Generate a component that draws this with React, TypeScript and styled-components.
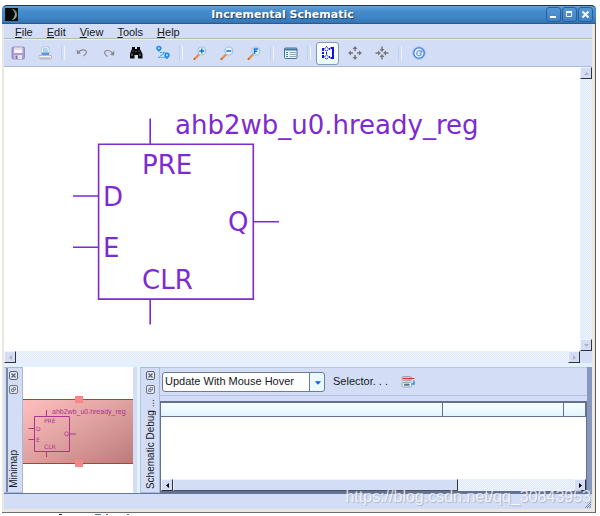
import React from "react";
import styled, { createGlobalStyle, css } from "styled-components";

const GlobalStyle = createGlobalStyle`
  * { box-sizing: border-box; }
  body {
    margin: 0;
    background: #fff;
    color: #16181d;
    font: 11px/13px "Liberation Sans", Arial, sans-serif;
  }
  button { font: inherit; color: inherit; margin: 0; padding: 0; border: 0; background: none; }
  svg { display: block; }
`;

const track = css`
  background: repeating-conic-gradient(#e1eafa 0 25%, #ecf3fc 0 50%) 0 0 / 2px 2px;
`;

const Page = styled.div`
  display: flex;
  flex-direction: column;
  height: 100vh;
  min-height: 400px;
  padding: 5px 4px 0 2px;
`;

const Shell = styled.div`
  flex: 1;
  min-height: 0;
  display: flex;
  flex-direction: column;
  background: #ece8e1;
  border-right: 1px solid #5d5a58;
  border-bottom: 1px solid #6f6c69;
  border-radius: 5px 5px 0 0;
`;

const TitleBar = styled.header`
  display: flex;
  align-items: center;
  height: 19px;
  flex: none;
  padding: 0 3px;
  margin-right: -1px;
  border-top: 1px solid #1d3550;
  border-bottom: 1px solid #2c5a8c;
  border-radius: 5px 5px 0 0;
  background: linear-gradient(#62a1dc, #468ccd 30%, #3f84c5 70%, #3474b3);
`;

const Title = styled.h1`
  flex: 1;
  margin: 0;
  padding-left: 2px;
  text-align: center;
  font: bold 11px/16px "DejaVu Sans", Verdana, sans-serif;
  color: #fff;
  text-shadow: 1px 1px 1px #1c3e63;
`;

const WindowButton = styled.button`
  width: 15px;
  height: 15px;
  margin-left: 1px;
  display: grid;
  place-items: center;
  border: 1px solid #2a5f96;
  border-radius: 3px;
  background: linear-gradient(#5596d5, #3f82c4);
`;

const Client = styled.div`
  flex: 1;
  min-height: 0;
  display: flex;
  flex-direction: column;
  margin: 0 3px 3px 2px;
  background: #d3def6;
`;

const MenuBar = styled.nav`
  display: flex;
  height: 15px;
  flex: none;
  padding-left: 11px;
  gap: 14px;
  border-bottom: 1px solid #b3bba9;
`;

const MenuItem = styled.button`
  line-height: 16px;
  &::first-letter { text-decoration: underline; }
`;

const ToolBar = styled.div`
  display: flex;
  align-items: center;
  height: 28px;
  flex: none;
  border-top: 1px solid #e6edfb;
  border-bottom: 1px solid #a9bbdf;
`;

const ToolButton = styled.button<{ $active?: boolean }>`
  width: ${(p) => (p.$active ? 23 : 27)}px;
  margin: 0 ${(p) => (p.$active ? 2 : 0)}px;
  height: 23px;
  flex: none;
  display: grid;
  place-items: center;
  ${(p) =>
    p.$active &&
    css`
      border: 1px solid #8896b5;
      border-radius: 3px;
      background: linear-gradient(#fff, #e9fbff);
    `}
`;

const Separator = styled.span`
  width: 10px;
  height: 14px;
  flex: none;
  display: grid;
  justify-content: center;
  &::before {
    content: "";
    width: 2px;
    border-left: 1px solid #c3d0ed;
    border-right: 1px solid #edf2fd;
  }
`;

const CanvasArea = styled.main`
  flex: 1;
  min-height: 0;
  display: grid;
  grid-template: minmax(0, 1fr) 12px / minmax(0, 1fr) 12px;
`;

const Canvas = styled.div`
  background: #fff;
  overflow: hidden;
`;

const ScrollBar = styled.div<{ $vertical?: boolean }>`
  display: flex;
  justify-content: space-between;
  flex-direction: ${(p) => (p.$vertical ? "column" : "row")};
  ${track}
`;

const ScrollButton = styled.button<{ $dim?: boolean }>`
  width: 12px;
  height: 12px;
  flex: none;
  display: grid;
  place-items: center;
  border: 1px solid;
  border-color: #eef3fd #303338 #303338 #eef3fd;
  background: #d3def6;
  color: ${(p) => (p.$dim ? "#b4b4b0" : "#000")};
`;

const Docks = styled.div`
  display: flex;
  flex: none;
  height: 131px;
  padding-top: 4px;
  background: #e3f0fd;
  border-bottom: 1px solid #66779b;
`;

const DockTitle = styled.div<{ $grip?: boolean }>`
  width: 19px;
  flex: none;
  display: flex;
  flex-direction: column;
  align-items: center;
  padding: 3px 0 4px ${(p) => (p.$grip ? 1 : 0)}px;
  gap: 5px;
  border: solid #a9b9dc;
  border-width: 1px 1px 1px 0;
  background: ${(p) =>
    p.$grip
      ? "linear-gradient(90deg, #d3def6 2px, #7688ac 2px 4px, #d3def6 4px)"
      : "#d3def6"};
`;

const DockButton = styled.button`
  width: 9px;
  height: 9px;
  flex: none;
`;

const VerticalLabel = styled.span`
  margin-top: auto;
  writing-mode: vertical-rl;
  transform: rotate(180deg);
  white-space: nowrap;
  font-size: 10px;
  line-height: 13px;
`;

const MiniView = styled.section`
  width: 110px;
  flex: none;
  background: #fff;
`;

const Splitter = styled.div`
  width: 8px;
  flex: none;
  border-left: 4px solid #d3def6;
  border-right: 1px solid #b4c4e6;
`;

const DebugPane = styled.section`
  flex: 1;
  min-width: 0;
  display: flex;
  flex-direction: column;
  border-right: 5px solid #8798bf;
  background: #d3def6;
`;

const DebugTools = styled.div`
  display: flex;
  align-items: center;
  height: 29px;
  flex: none;
  padding-left: 2px;
  margin-bottom: 5px;
  border-top: 1px solid #b9c7e6;
  border-bottom: 1px solid #b0bfe0;
`;

const SelectBox = styled.div`
  position: relative;
  width: 163px;
  height: 20px;
  margin-right: 8px;
`;

const Select = styled.select`
  width: 100%;
  height: 100%;
  padding: 0 18px 0 2px;
  appearance: none;
  border: 1px solid #6d7c9b;
  border-radius: 3px;
  background: linear-gradient(90deg, #fff 146px, #6d7c9b 146px 147px, #eafaff 147px);
  color: #16181d;
  font: inherit;
`;

const SelectArrow = styled.span`
  position: absolute;
  right: 4px;
  top: 8px;
  color: #0b5bea;
  pointer-events: none;
`;

const SelectorButton = styled.button`
  margin-right: 12px;
  white-space: pre;
`;

const TableFrame = styled.div`
  flex: 1;
  min-height: 0;
  display: flex;
  flex-direction: column;
  border: 1px solid #63718f;
  border-top-width: 2px;
  border-bottom-width: 2px;
  background: #fff;
`;

const Table = styled.table`
  width: 100%;
  table-layout: fixed;
  border-collapse: collapse;
`;

const HeadCell = styled.th<{ $width?: string }>`
  width: ${(p) => p.$width ?? "auto"};
  height: 13px;
  padding: 0;
  border-right: 1px solid #63718f;
  border-bottom: 1px solid #63718f;
  background: linear-gradient(#f8ffff, #e2f4fd);
`;

const TableScroll = styled.div`
  display: flex;
  height: 12px;
  margin-top: auto;
  ${track}
`;

const Thumb = styled.div`
  width: 71%;
  border: 1px solid;
  border-color: #eef3fd #303338 #4c5260 #eef3fd;
  background: #d3def6;
`;

const ThumbTrack = styled.div`
  flex: 1;
  display: flex;
`;

const StatusBar = styled.footer`
  height: 15px;
  flex: none;
  display: flex;
  align-items: flex-end;
  justify-content: flex-end;
  padding: 0 1px 1px 0;
`;

const Watermark = styled.div`
  position: absolute;
  right: 9px;
  bottom: 10px;
  font-size: 16px;
  line-height: 18px;
  color: rgba(255, 255, 255, 0.75);
  text-shadow: 1px 1px 1px rgba(110, 120, 145, 0.4);
  pointer-events: none;
`;

type Dir = "up" | "down" | "left" | "right";
const arrows: Record<Dir, string> = {
  up: "M0 4h5L2.500 1z",
  down: "M0 1h5L2.500 4z",
  left: "M4 0v5L1 2.500z",
  right: "M1 0v5L4 2.500z",
};

const Arrow = ({ dir, size = 5 }: { dir: Dir; size?: number }) => (
  <svg width={size} height={size} viewBox="0 0 5 5" fill="currentColor">
    <path d={arrows[dir]} />
  </svg>
);

const Scroll = ({ dir, dim }: { dir: Dir; dim?: boolean }) => (
  <ScrollButton $dim={dim} aria-label={`Scroll ${dir}`}>
    <Arrow dir={dir} />
  </ScrollButton>
);

const Icon = ({ children }: { children: React.ReactNode }) => (
  <svg width="16" height="16" viewBox="0 0 16 16" fill="none">
    {children}
  </svg>
);

const AppLogo = () => (
  <svg width="13" height="13" viewBox="0 0 13 13">
    <path d="M0 0h13v13H0z" fill="#050807" />
    <path d="M6.500 1a5.500 5.500 0 0 1 0 11 8 8 0 0 0 3.500-5.500A7 7 0 0 0 6.500 1z" fill="#8fa59b" />
    <path d="M8 1a6 6 0 0 1 3.800 5" stroke="#2f7a42" fill="none" />
  </svg>
);

const SaveIcon = () => (
  <Icon>
    <rect x="2" y="2" width="12.500" height="12" rx="1.500" fill="#aa9bd0" stroke="#8c7cb4" strokeWidth=".8" />
    <path d="M4 2.500h8.500V8H4z" fill="#f6f4fa" />
    <path d="M4 4h8.500" stroke="#dcc3d4" />
    <path d="M4.500 10h7.500v4H4.500z" fill="#e4dff2" />
    <path d="M5.500 10.500h2V14h-2z" fill="#8070a8" />
  </Icon>
);

const PrintIcon = () => (
  <Icon>
    <path d="M5 2h6.500l1 6h-8z" fill="#f8fbff" stroke="#a3b6d4" strokeWidth=".7" />
    <path d="M6 4h4.500M6 6h5" stroke="#6ca5e3" />
    <path d="m3.500 7.500-1.500 4h12.500l-2-4z" fill="#cddaf0" />
    <path d="M5 7.500h7v2.500H4.500z" fill="#5598e2" />
    <path d="M2 10.500h12.500v2.500l-1 1H3l-1-1z" fill="#f4f4f0" stroke="#a8a9ad" strokeWidth=".7" />
    <path d="M3 13h10.500" stroke="#9ba0aa" />
  </Icon>
);

const UndoIcon = () => (
  <Icon>
    <path d="M4 7.500C7 4 11.500 4.500 12.300 6.500c.6 1.800-.9 3.200-2.800 4.500" stroke="#87898c" strokeWidth="1.200" />
    <path d="m2.700 4.500.2 4.500 4-.5z" fill="#87898c" />
  </Icon>
);

const RedoIcon = () => (
  <Icon>
    <path d="M12 8.500C9 4.500 4.500 5 3.700 7c-.6 1.800.9 3 2.800 4.500" stroke="#87898c" strokeWidth="1.200" />
    <path d="m13.300 5.500-.2 5-4-.5z" fill="#87898c" />
  </Icon>
);

const BinocularsIcon = () => (
  <Icon>
    <path d="M4 2h3v2h2V2h3v2l1 2 1.500 3v4.500H10V10H6.500v3.500H2V9l1-3 1-2z" fill="#080808" />
    <path d="M5 5.500v1M11 5.500v1M4 8.500V11M12 8.500V11M8 6v1" stroke="#b9c3d8" strokeWidth=".7" />
  </Icon>
);

const NetIcon = () => (
  <Icon>
    <path d="M5 7.500h4.500L4 12.500h7" stroke="#3f9ff2" strokeWidth="1.200" strokeDasharray="2 .7" />
    <path d="M3.800.800c2 0 2.800 1.200 2.800 2.400S5.200 5.700 4 7C2.700 5.700 1.200 4.500 1.200 3.200S2 .8 3.800.8zM12 7.500c1.800 0 2.800 1.200 2.800 2.700S13.300 13 12 14.200c-1.500-1.200-2.700-2.500-2.700-4S10.300 7.500 12 7.500z" fill="#218cf2" />
    <circle cx="3.900" cy="3.200" r="1" fill="#b9e0ff" />
    <circle cx="12" cy="10.200" r="1" fill="#b9e0ff" />
  </Icon>
);

const ZoomIcon = ({ mark }: { mark: string }) => (
  <Icon>
    <path d="M2.500 14 7 9.500" stroke="#e98a3d" strokeWidth="2.200" strokeLinecap="round" />
    <path d="m2 14.500 1-1" stroke="#b6543a" strokeWidth="1.500" />
    <circle cx="9.800" cy="6" r="4" fill="#e3f4ff" stroke="#a5c2e6" strokeWidth="1.200" />
    <path d={mark} stroke="#1474d4" strokeWidth="1.500" />
  </Icon>
);

const PanelIcon = () => (
  <Icon>
    <rect x="1.500" y="3" width="12.500" height="10.500" rx="1" fill="#eaf7fb" stroke="#477496" />
    <path d="M1.500 4.500H14" stroke="#44779d" strokeWidth="2" />
    <path d="M3 7.500h2M3 9.500h2M3 11.500h2" stroke="#3388b8" />
    <path d="M6.500 7.500H13M6.500 9.500H13M6.500 11.500H13" stroke="#8eabb9" />
  </Icon>
);

const CircuitIcon = () => (
  <Icon>
    <path d="M3 3v3M3 7v2M3 10v3" stroke="#1212dc" strokeWidth="2" />
    <path d="M10.500 3H13v10h-2.500" stroke="#1212dc" strokeWidth="2" />
    <path d="M6.500 1.500 8.500 4l-2 2.500L4.500 4zM6.500 9.500l2 2.500-2 2.500-2-2.500z" fill="#fff" stroke="#1212dc" strokeDasharray="1.600 .7" />
    <path d="M6.500 7v2M9.500 3v2M9.500 11v2" stroke="#1212dc" />
  </Icon>
);

const ExpandIcon = () => (
  <Icon>
    <path d="M8 6V3M8 10v3M6 8H3M10 8h3" stroke="#77777a" strokeWidth="1.500" />
    <path d="M8 1 5.500 4h5zM8 15l-2.500-3h5zM1 8l3-2.500v5zM15 8l-3-2.500v5z" fill="#77777a" />
  </Icon>
);

const CollapseIcon = () => (
  <Icon>
    <path d="M8 1.500V5M8 14.500V11M1.500 8H5M14.500 8H11" stroke="#77777a" strokeWidth="1.500" />
    <path d="M8 7 5.500 4h5zM8 9l-2.500 3h5zM7 8 4 5.500v5zM9 8l3-2.500v5z" fill="#77777a" />
  </Icon>
);

const ReloadIcon = () => (
  <Icon>
    <circle cx="8" cy="8" r="5.300" fill="#f2f8ff" stroke="#4c82e6" strokeWidth="1.600" />
    <circle cx="8" cy="8" r="6.200" stroke="#84acf0" strokeWidth=".6" />
    <path d="M9.500 6A2.500 2.500 0 1 0 10 10V8.300H8" stroke="#6c96df" strokeWidth="1.100" />
    <path d="m11.300 4.500.2 3.500-3-1.300z" fill="#6c96df" />
  </Icon>
);

const SelectorIcon = () => (
  <Icon>
    <rect x="2" y="2.500" width="9.500" height="4" rx="1.500" fill="#c7cbd2" stroke="#92979f" strokeWidth=".8" />
    <path d="M3 4.500h11.500" stroke="#d52f38" />
    <rect x="2" y="8.500" width="9.500" height="4.500" rx="1" fill="#eef1f5" stroke="#8e98a5" strokeWidth=".8" />
    <path d="M4 10.700h5.500" stroke="#50749a" strokeWidth="2" />
    <path d="M14 6.500v3.500h-2" stroke="#1c86eb" strokeWidth="1.300" />
  </Icon>
);

const CloseMark = () => (
  <svg width="9" height="9" fill="none" stroke="#5a6272">
    <rect x=".5" y=".5" width="8" height="8" rx="1.500" fill="#e2e9f5" />
    <path d="m2.500 2.500 4 4m0-4-4 4" strokeWidth="1.300" />
  </svg>
);

const FloatMark = () => (
  <svg width="9" height="9" fill="none" stroke="#6d7585">
    <rect x=".5" y=".5" width="8" height="8" rx="1.500" fill="#e2e9f5" />
    <path d="M4 2.500h2.500V5H4zM2.500 4H5v2.500H2.500z" strokeWidth=".8" />
  </svg>
);

const Schematic = () => (
  <svg width="100%" height="100%" fill="none" stroke="#7d2bd0" strokeWidth="1.600" role="img" aria-label="Register schematic">
    <path d="M94.600 77.300h154.700v154.800H94.600zM146.200 51.500v25.800M146.200 232v25.500M69 129h25.600M69 180.300h25.600M249.300 154.700H275" />
    <g fill="#7d2bd0" stroke="none" fontFamily='"DejaVu Sans", sans-serif' fontSize="26">
      <text x="171" y="67">ahb2wb_u0.hready_reg</text>
      <text x="138" y="107">PRE</text>
      <text x="99" y="139">D</text>
      <text x="99" y="190">E</text>
      <text x="224" y="164">Q</text>
      <text x="138" y="222">CLR</text>
    </g>
  </svg>
);

const Minimap = () => (
  <svg width="110" height="126" fill="none" role="img" aria-label="Schematic overview">
    <defs>
      <linearGradient id="view" x1="0" y1="0" x2="1" y2="1">
        <stop offset="0" stopColor="#ffbfbf" />
        <stop offset=".5" stopColor="#dfa19f" />
        <stop offset="1" stopColor="#bb7b7b" />
      </linearGradient>
    </defs>
    <path d="M0 32h110v64H0z" fill="url(#view)" />
    <path d="M0 32.500h110M0 96.500h110" stroke="#e6262b" />
    <path d="M52 29h8v7h-8zM52 93h8v7h-8z" fill="#fd8585" />
    <path d="M11.500 49.500h35v35h-35zM23.500 43v6M23.500 85v5M5.500 61.500h6M5.500 72.500h6M46.500 67h6.500" stroke="#aa3490" />
    <g fill="#aa3490" fontFamily='"DejaVu Sans", sans-serif' fontSize="6">
      <text x="29" y="47" fontSize="7" fontFamily='"Liberation Sans", sans-serif'>ahb2wb_u0.hready_reg</text>
      <text x="21" y="56">PRE</text>
      <text x="13" y="64">D</text>
      <text x="13" y="75">E</text>
      <text x="41" y="69">Q</text>
      <text x="21" y="82">CLR</text>
    </g>
  </svg>
);

const DockHeader = ({ label, grip }: { label: string; grip?: boolean }) => (
  <DockTitle $grip={grip}>
    <DockButton aria-label={`Close ${label}`}><CloseMark /></DockButton>
    <DockButton aria-label={`Float ${label}`}><FloatMark /></DockButton>
    <VerticalLabel>{label}</VerticalLabel>
  </DockTitle>
);

type Tool = { name: string; icon: React.ReactNode; active?: boolean };
const toolGroups: Tool[][] = [
  [
    { name: "Save", icon: <SaveIcon /> },
    { name: "Print", icon: <PrintIcon /> },
  ],
  [
    { name: "Undo", icon: <UndoIcon /> },
    { name: "Redo", icon: <RedoIcon /> },
    { name: "Find", icon: <BinocularsIcon /> },
    { name: "Trace path", icon: <NetIcon /> },
  ],
  [
    { name: "Zoom in", icon: <ZoomIcon mark="M9.800 3.500v5M7.300 6h5" /> },
    { name: "Zoom out", icon: <ZoomIcon mark="M7.300 6h5" /> },
    { name: "Zoom full", icon: <ZoomIcon mark="M8.500 9V4h3.500M8.500 6.300h2.700" /> },
  ],
  [{ name: "Properties", icon: <PanelIcon /> }],
  [
    { name: "Incremental mode", icon: <CircuitIcon />, active: true },
    { name: "Expand", icon: <ExpandIcon /> },
    { name: "Collapse", icon: <CollapseIcon /> },
  ],
  [{ name: "Regenerate", icon: <ReloadIcon /> }],
];

export default function App() {
  return (
    <Page>
      <GlobalStyle />
      <Shell>
        <TitleBar>
          <AppLogo />
          <Title>Incremental Schematic</Title>
          <WindowButton aria-label="Minimize">
            <svg width="9" height="9"><path d="M1 6h6v2H1z" fill="#fff" /></svg>
          </WindowButton>
          <WindowButton aria-label="Maximize">
            <svg width="9" height="9"><path d="M1.500 2.500h5v4h-5zM1 1.500h6" stroke="#fff" fill="none" /></svg>
          </WindowButton>
          <WindowButton aria-label="Close">
            <svg width="9" height="9"><path d="m1.500 1.500 6 6m0-6-6 6" stroke="#fff" strokeWidth="2" /></svg>
          </WindowButton>
        </TitleBar>
        <Client>
          <MenuBar>
            {["File", "Edit", "View", "Tools", "Help"].map((m) => (
              <MenuItem key={m}>{m}</MenuItem>
            ))}
          </MenuBar>
          <ToolBar role="toolbar" aria-label="Schematic tools">
            {toolGroups.map((group, i) => (
              <React.Fragment key={i}>
                {i > 0 && <Separator />}
                {group.map((t) => (
                  <ToolButton key={t.name} aria-label={t.name} $active={t.active}>
                    {t.icon}
                  </ToolButton>
                ))}
              </React.Fragment>
            ))}
          </ToolBar>
          <CanvasArea>
            <Canvas><Schematic /></Canvas>
            <ScrollBar $vertical>
              <Scroll dir="up" dim />
              <Scroll dir="down" dim />
            </ScrollBar>
            <ScrollBar>
              <Scroll dir="left" dim />
              <Scroll dir="right" dim />
            </ScrollBar>
          </CanvasArea>
          <Docks>
            <DockHeader label="Minimap" grip />
            <MiniView><Minimap /></MiniView>
            <Splitter />
            <DockHeader label="Schematic Debug ..." />
            <DebugPane>
              <DebugTools>
                <SelectBox>
                  <Select aria-label="Update mode">
                    <option>Update With Mouse Hover</option>
                  </Select>
                  <SelectArrow><Arrow dir="down" size={6} /></SelectArrow>
                </SelectBox>
                <SelectorButton>Selector. . .</SelectorButton>
                <button aria-label="Edit selector"><SelectorIcon /></button>
              </DebugTools>
              <TableFrame>
                <Table>
                  <thead>
                    <tr>
                      <HeadCell aria-label="Name" />
                      <HeadCell aria-label="Value" $width="121px" />
                      <HeadCell aria-label="Type" $width="22px" />
                    </tr>
                  </thead>
                </Table>
                <TableScroll>
                  <Scroll dir="left" />
                  <ThumbTrack><Thumb /></ThumbTrack>
                  <Scroll dir="right" />
                </TableScroll>
              </TableFrame>
            </DebugPane>
          </Docks>
          <StatusBar>
            <svg width="6" height="6" stroke="#7d8596"><path d="M0 6 6 0M2 6l4-4M4 6l2-2" /></svg>
          </StatusBar>
        </Client>
      </Shell>
      <svg width="100%" height="3">
        <path d="M57 1h3v1h-3z" fill="#222" />
        <path d="M93 1h6v1h-6zM104 1h2v1h-2zM125 1h2v1h-2z" fill="#4a72b8" />
      </svg>
      <Watermark>https://blog.csdn.net/qq_30843953</Watermark>
    </Page>
  );
}
